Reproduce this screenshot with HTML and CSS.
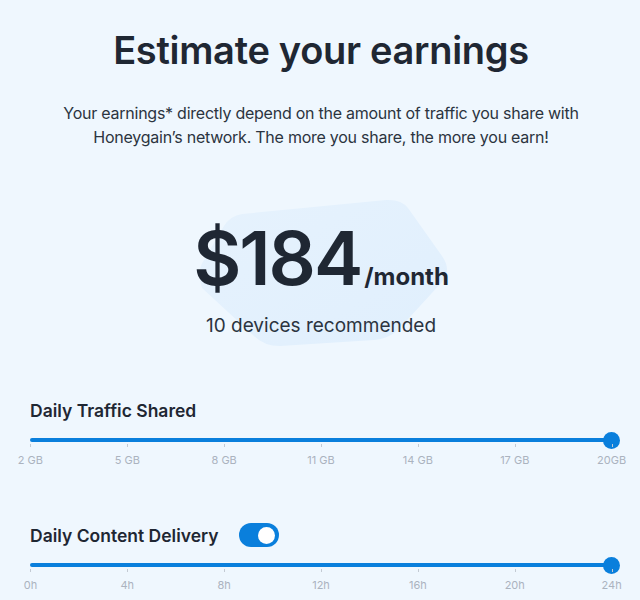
FILE: index.html
```html
<!DOCTYPE html>
<html lang="en">
<head>
  <meta charset="UTF-8" />
  <title>Estimate your earnings</title>
  <link rel="stylesheet" href="styles.css">
</head>
<body>
  <div class="page">
    <h1 class="title">Estimate your earnings</h1>
    <p class="lead">Your earnings* directly depend on the amount of traffic you share with Honeygain’s network. The more you share, the more you earn!</p>

    <!-- Estimated result -->
    <div class="result">
      <svg class="blob" width="260" height="152" viewBox="0 0 260 152">
        <defs>
          <linearGradient id="blobFill" x1="0" y1="0" x2="1" y2="1">
            <stop offset="0" stop-color="#e6f2fd" />
            <stop offset="1" stop-color="#e0effd" />
          </linearGradient>
        </defs>
        <path d="M8 62 Q0 74 6 90 L58 138 Q68 148 84 148 L178 142 Q192 141 202 132 L246 84 Q256 72 246 58 L212 10 Q205 1 190 2 L46 16 Q34 18 28 28 Z" fill="url(#blobFill)" />
      </svg>
      <div class="price">
        <span class="amount">$184</span><span class="period">/month</span>
      </div>
      <div class="devices">10 devices recommended</div>
    </div>

    <!-- Traffic slider -->
    <div class="control">
      <div class="control-head">
        <span class="control-label">Daily Traffic Shared</span>
      </div>
      <div class="slider">
        <div class="track"><span class="thumb"></span></div>
        <div class="scale">
          <span>2 GB</span><span>5 GB</span><span>8 GB</span><span>11 GB</span><span>14 GB</span><span>17 GB</span><span>20GB</span>
        </div>
      </div>
    </div>

    <!-- Content delivery slider -->
    <div class="control">
      <div class="control-head">
        <span class="control-label">Daily Content Delivery</span>
        <span class="toggle on"><span class="knob"></span></span>
      </div>
      <div class="slider">
        <div class="track"><span class="thumb"></span></div>
        <div class="scale">
          <span>0h</span><span>4h</span><span>8h</span><span>12h</span><span>16h</span><span>20h</span><span>24h</span>
        </div>
      </div>
    </div>
  </div>
</body>
</html>
```

FILE: styles.css
```css
body {
  margin: 0;
  background: #eff7fe;
  color: #1f2733;
  font-family: Inter, 'Noto Sans', sans-serif;
  overflow-x: hidden;
}
.page {
  padding: 24px 28px 0 30px;
}
.title {
  margin: 0;
  text-align: center;
  font-size: 38px;
  font-weight: 600;
  letter-spacing: -0.3px;
  line-height: 52px;
}
.lead {
  margin: 25px auto 0;
  max-width: 540px;
  text-align: center;
  font-size: 16px;
  line-height: 24px;
  letter-spacing: -0.25px;
  color: #2b3440;
}

/* result block */
.result {
  position: relative;
  margin-top: 49px;
  padding: 23px 0 59px;
  text-align: center;
}
.blob {
  position: absolute;
  left: 166px;
  top: 0;
}
.price {
  position: relative;
  line-height: 74px;
  height: 74px;
}
.amount {
  font-size: 74px;
  font-weight: 600;
  letter-spacing: -2px;
}
.period {
  font-size: 24px;
  font-weight: 700;
  margin-left: 3px;
}
.devices {
  position: relative;
  margin-top: 19px;
  font-size: 19px;
  line-height: 24px;
  color: #2b3440;
}

/* sliders */
.control {
  margin-bottom: 55px;
}
.control:last-child {
  margin-bottom: 0;
}
.control-head {
  display: flex;
  align-items: center;
  gap: 20px;
  height: 26px;
}
.control-label {
  font-size: 17.5px;
  font-weight: 600;
}
.toggle {
  width: 40px;
  height: 24px;
  border-radius: 12px;
  background: #0a7fdc;
  display: flex;
  align-items: center;
  justify-content: flex-end;
  padding: 0 4px;
  box-sizing: border-box;
}
.knob {
  width: 17px;
  height: 17px;
  border-radius: 50%;
  background: #fff;
}
.slider {
  margin-top: 15px;
}
.track {
  height: 4px;
  border-radius: 2px;
  background: #0a7fdc;
  display: flex;
  justify-content: flex-end;
  align-items: center;
}
.thumb {
  width: 17px;
  height: 17px;
  border-radius: 50%;
  background: #0a7fdc;
  margin-right: -8px;
}
.scale {
  display: flex;
  margin: 0 -48px 0 -48px;
}
.scale span {
  flex: 1;
  text-align: center;
  font-size: 11px;
  color: #abb3bf;
  padding-top: 11px;
  position: relative;
}
.scale span::before {
  content: "";
  position: absolute;
  top: 2px;
  left: 50%;
  width: 1px;
  height: 3px;
  background: #c3cad3;
}
```
